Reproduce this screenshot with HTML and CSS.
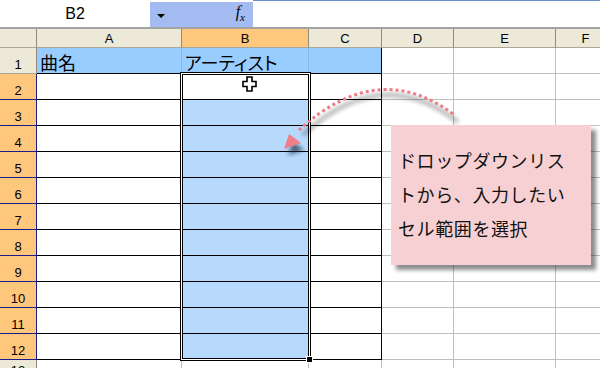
FILE: index.html
```html
<!DOCTYPE html>
<html lang="ja">
<head>
    <meta charset="UTF-8">
    <meta name="viewport" content="width=device-width, initial-scale=1.0">
    <title>セル範囲を選択</title>
    <link rel="stylesheet" href="styles.css">
</head>
<body>

    <!-- Formulebalk -->
    <div class="formula-bar">
        <div class="name-box">B2</div>
        <div class="name-tools">
            <span class="drop-arrow"></span>
            <span class="fx">f<sub>x</sub></span>
        </div>
        <div class="formula-input"></div>
    </div>

    <!-- Werkblad -->
    <div class="sheet">
        <div class="row row-head">
            <div class="cell corner"></div>
            <div class="cell col-head">A</div>
            <div class="cell col-head active">B</div>
            <div class="cell col-head">C</div>
            <div class="cell col-head">D</div>
            <div class="cell col-head">E</div>
            <div class="cell col-head">F</div>
        </div>
        <div class="row row-title">
            <div class="cell row-num">1</div>
            <div class="cell title">曲名</div>
            <div class="cell title kana">アーティスト</div>
            <div class="cell title title-end"></div>
            <div class="cell"></div>
            <div class="cell"></div>
            <div class="cell"></div>
        </div>
        <div class="row">
            <div class="cell row-num picked">2</div>
            <div class="cell data"></div>
            <div class="cell data current"></div>
            <div class="cell data"></div>
            <div class="cell"></div>
            <div class="cell"></div>
            <div class="cell"></div>
        </div>
        <div class="row">
            <div class="cell row-num picked">3</div>
            <div class="cell data"></div>
            <div class="cell data range"></div>
            <div class="cell data"></div>
            <div class="cell"></div>
            <div class="cell"></div>
            <div class="cell"></div>
        </div>
        <div class="row">
            <div class="cell row-num picked">4</div>
            <div class="cell data"></div>
            <div class="cell data range"></div>
            <div class="cell data"></div>
            <div class="cell"></div>
            <div class="cell"></div>
            <div class="cell"></div>
        </div>
        <div class="row">
            <div class="cell row-num picked">5</div>
            <div class="cell data"></div>
            <div class="cell data range"></div>
            <div class="cell data"></div>
            <div class="cell"></div>
            <div class="cell"></div>
            <div class="cell"></div>
        </div>
        <div class="row">
            <div class="cell row-num picked">6</div>
            <div class="cell data"></div>
            <div class="cell data range"></div>
            <div class="cell data"></div>
            <div class="cell"></div>
            <div class="cell"></div>
            <div class="cell"></div>
        </div>
        <div class="row">
            <div class="cell row-num picked">7</div>
            <div class="cell data"></div>
            <div class="cell data range"></div>
            <div class="cell data"></div>
            <div class="cell"></div>
            <div class="cell"></div>
            <div class="cell"></div>
        </div>
        <div class="row">
            <div class="cell row-num picked">8</div>
            <div class="cell data"></div>
            <div class="cell data range"></div>
            <div class="cell data"></div>
            <div class="cell"></div>
            <div class="cell"></div>
            <div class="cell"></div>
        </div>
        <div class="row">
            <div class="cell row-num picked">9</div>
            <div class="cell data"></div>
            <div class="cell data range"></div>
            <div class="cell data"></div>
            <div class="cell"></div>
            <div class="cell"></div>
            <div class="cell"></div>
        </div>
        <div class="row">
            <div class="cell row-num picked">10</div>
            <div class="cell data"></div>
            <div class="cell data range"></div>
            <div class="cell data"></div>
            <div class="cell"></div>
            <div class="cell"></div>
            <div class="cell"></div>
        </div>
        <div class="row">
            <div class="cell row-num picked">11</div>
            <div class="cell data"></div>
            <div class="cell data range"></div>
            <div class="cell data"></div>
            <div class="cell"></div>
            <div class="cell"></div>
            <div class="cell"></div>
        </div>
        <div class="row">
            <div class="cell row-num picked">12</div>
            <div class="cell data"></div>
            <div class="cell data range"></div>
            <div class="cell data"></div>
            <div class="cell"></div>
            <div class="cell"></div>
            <div class="cell"></div>
        </div>
        <div class="row row-last">
            <div class="cell row-num">13</div>
            <div class="cell"></div>
            <div class="cell"></div>
            <div class="cell"></div>
            <div class="cell"></div>
            <div class="cell"></div>
            <div class="cell"></div>
        </div>

        <!-- Selectiekader B2:B12 -->
        <div class="selection"><span class="fill-handle"></span></div>
    </div>

    <!-- Muiscursor -->
    <svg class="cursor" width="15" height="16" viewBox="0 0 15 16">
        <polygon points="5,1 10,1 10,5.5 14,5.5 14,10.5 10,10.5 10,15 5,15 5,10.5 1,10.5 1,5.5 5,5.5" fill="#fff" stroke="#000" stroke-width="1.6"/>
    </svg>

    <!-- Gestippelde pijl -->
    <svg class="arrow" width="600" height="368" viewBox="0 0 600 368">
        <defs>
            <filter id="blur" x="-20%" y="-20%" width="140%" height="140%">
                <feGaussianBlur stdDeviation="2"/>
            </filter>
        </defs>
        <path d="M458 122 Q381 62 303 135" fill="none" stroke="#000" stroke-opacity="0.3" stroke-width="4" filter="url(#blur)"/>
        <polygon points="288,155 293,142 304,150" fill="#1a2a40" fill-opacity="0.7" filter="url(#blur)"/>
        <path d="M453 114 Q378 58 299 130" fill="none" stroke="#ee7c86" stroke-width="3" stroke-dasharray="3 3"/>
        <polygon points="284,149 289,134 301,143" fill="#f07f8a"/>
    </svg>

    <!-- Toelichting -->
    <div class="callout">
        <p>ドロップダウンリス</p>
        <p>トから、入力したい</p>
        <p>セル範囲を選択</p>
    </div>

</body>
</html>
```

FILE: styles.css
```css
/* Algemeen */
body {
    margin: 0;
    width: 600px;
    height: 368px;
    overflow: hidden;
    position: relative;
    background-color: #fff;
    font-family: "Liberation Sans", Arial, sans-serif;
}

/* Formulebalk */
.formula-bar {
    display: flex;
    height: 27px;
    border-bottom: 2px solid #a3a3a3;
}

.name-box {
    width: 150px;
    font-size: 16px;
    line-height: 27px;
    text-align: center;
    color: #000;
}

.name-tools {
    width: 103px;
    margin-top: 2px;
    background-color: #a3bbf0;
    display: flex;
    align-items: center;
    justify-content: space-between;
    padding: 0 8px 0 7px;
    box-sizing: border-box;
}

.drop-arrow {
    width: 0;
    height: 0;
    border-left: 4px solid transparent;
    border-right: 4px solid transparent;
    border-top: 4px solid #000;
    margin-top: 2px;
}

.fx {
    font-family: "Liberation Serif", serif;
    font-style: italic;
    font-size: 16px;
    margin-top: -3px;
}

.fx sub {
    font-size: 11px;
}

.formula-input {
    flex: 1;
    border-top: 1px solid #6d8fd2;
}

/* Werkblad */
.sheet {
    position: relative;
}

.row {
    display: grid;
    grid-template-columns: 37px 145px 127px 73px 72px 102px 60px;
    height: 26px;
}

.row-head {
    height: 19px;
}

.row-last {
    height: 20px;
}

.cell {
    box-sizing: border-box;
    border-right: 1px solid #c0c0c0;
    border-bottom: 1px solid #c0c0c0;
    overflow: hidden;
}

/* Kolom- en rijkoppen */
.corner,
.col-head,
.row-num {
    background-color: #ece9d8;
    border-right-color: #8f8c7c;
    border-bottom-color: #aca899;
    font-size: 13px;
    color: #000;
    text-align: center;
}

.col-head {
    line-height: 19px;
}

.col-head.active {
    background-color: #ffc77c;
}

.row-num {
    display: flex;
    align-items: flex-end;
    justify-content: center;
    padding-bottom: 1px;
}

.row-num.picked {
    background-color: #ffc77c;
    border-right-color: #1a1a8a;
    border-bottom-color: #1a1a8a;
}

/* Titelrij */
.title {
    background-color: #99ccff;
    border-right-color: #86b6ea;
    border-bottom-color: #000;
    font-family: "Noto Sans CJK JP", sans-serif;
    font-size: 18px;
    line-height: 1;
    padding: 5px 0 0 3px;
    color: #000;
}

.title.kana {
    font-feature-settings: "palt";
}

.title-end {
    border-right-color: #000;
}

/* Gegevensbereik */
.data {
    border-right-color: #000;
    border-bottom-color: #000;
}

.data.range {
    background-color: #b7d9fc;
}

.selection {
    position: absolute;
    left: 180px;
    top: 43px;
    width: 131px;
    height: 289px;
    box-sizing: border-box;
    border: 1px solid #000;
    box-shadow: inset 0 0 0 1px #fff, inset 0 0 0 2px #000;
}

.fill-handle {
    position: absolute;
    right: -3px;
    bottom: -3px;
    width: 5px;
    height: 5px;
    background-color: #000;
    border: 1px solid #fff;
}

/* Overlay-elementen */
.cursor {
    position: absolute;
    left: 242px;
    top: 76px;
}

.arrow {
    position: absolute;
    left: 0;
    top: 0;
    pointer-events: none;
}

.callout {
    position: absolute;
    left: 391px;
    top: 125px;
    width: 200px;
    height: 140px;
    box-sizing: border-box;
    padding: 18px 0 0 7px;
    background-color: #f7d0d3;
    box-shadow: 5px 5px 4px rgba(0, 0, 0, 0.45);
    font-family: "Noto Sans CJK JP", sans-serif;
    font-size: 18px;
    letter-spacing: 0.6px;
    color: #111;
}

.callout p {
    margin: 0;
    line-height: 34px;
    height: 34px;
}
```
